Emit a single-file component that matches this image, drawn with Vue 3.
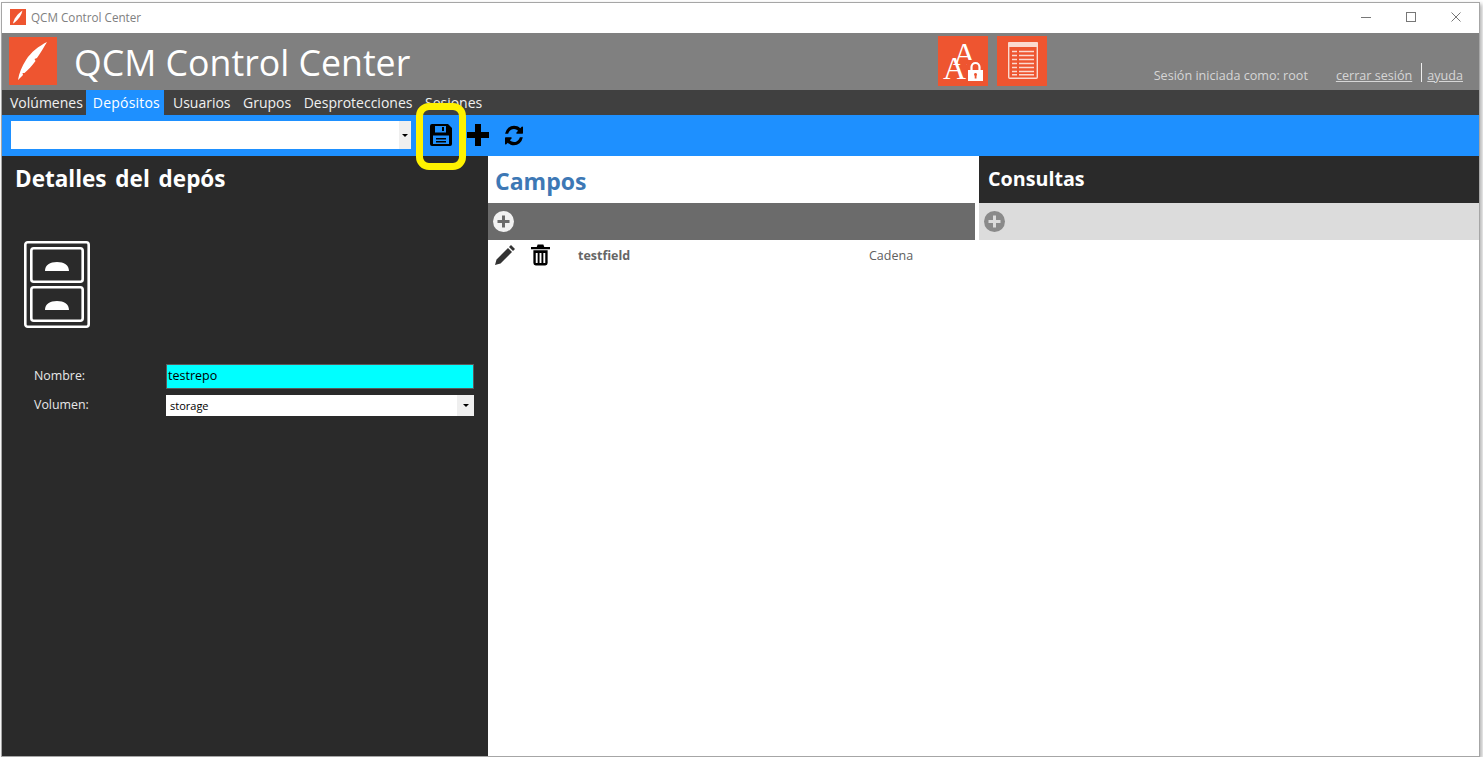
<script setup>
const tabs = ['Volúmenes', 'Depósitos', 'Usuarios', 'Grupos', 'Desprotecciones', 'Sesiones']
</script>

<template>
  <div class="window">
    <div class="titlebar">
      <svg class="title-logo" viewBox="0 0 16 16"><rect width="16" height="16" fill="#ee5530"/><path d="M3 14.500C4 10 7 5 12.500 1.500 11.500 6 9 10 4 14Z" fill="#fff"/></svg>
      <span class="title-text">QCM Control Center</span>
      <div class="win-buttons">
        <svg viewBox="0 0 10 10" class="wb"><path d="M0 5.500H10" stroke="#777" stroke-width="1" fill="none"/></svg>
        <svg viewBox="0 0 10 10" class="wb"><rect x=".5" y=".5" width="9" height="9" stroke="#777" fill="none"/></svg>
        <svg viewBox="0 0 10 10" class="wb"><path d="M.5.5L9.500 9.500M9.500.5L.5 9.500" stroke="#777" fill="none"/></svg>
      </div>
    </div>

    <header class="header">
      <svg class="logo" viewBox="0 0 48 48"><rect width="48" height="48" fill="#ee5530"/>
        <path d="M9 43C10 36 13 29 17 23 22 15 30 9 38 5 35 10 32 15 28 21L25.500 22 26.500 24C23 29 19 33 15.500 36L13.500 36 14 38Z" fill="#fff"/>
      </svg>
      <h1 class="app-name">QCM Control Center</h1>
      <div class="shortcuts">
        <svg class="shortcut" viewBox="0 0 50 50"><rect width="50" height="50" fill="#ee5530"/>
          <text x="26.500" y="29" class="serif mid">A</text>
          <text x="16.500" y="43" class="serif big">A</text>
          <rect x="28.500" y="24" width="18" height="22.500" fill="#ee5530"/>
          <path d="M33.500 34v-3a4 4 0 0 1 8 0v3" stroke="#fff" stroke-width="2.200" fill="none"/>
          <rect x="30" y="34" width="15" height="11" fill="#fff"/><rect x="36.700" y="38" width="1.800" height="4.500" fill="#ee5530"/><circle cx="37.500" cy="38.500" r="1.400" fill="#ee5530"/>
        </svg>
        <svg class="shortcut" viewBox="0 0 50 50"><rect width="50" height="50" fill="#ee5530"/>
          <rect x="11.700" y="7" width="28.600" height="35.300" rx="1" fill="none" stroke="#fbd9cf" stroke-width="1.400"/>
          <rect x="11" y="6" width="30" height="5" rx="1" fill="#fbd9cf"/>
          <path d="M15 15.500h5M22 15.500h15M15 19.500h5M22 19.500h15M15 23.500h5M22 23.500h15M15 27.500h5M22 27.500h15M15 31.500h5M22 31.500h15M15 35.500h5M22 35.500h15M15 38.700h5M22 38.700h15" stroke="#fbd9cf" stroke-width="1.400" fill="none"/>
        </svg>
      </div>
      <div class="session">
        <span class="who">Sesión iniciada como: root</span>
        <a class="link">cerrar sesión</a>
        <span class="sep"></span>
        <a class="link">ayuda</a>
      </div>
    </header>

    <nav class="tabs">
      <span v-for="t in tabs" :key="t" class="tab" :class="{ active: t === 'Depósitos' }">{{ t }}</span>
    </nav>

    <div class="toolbar">
      <div class="combo top-combo"><span class="combo-text"></span><span class="arrow"><i></i></span></div>
      <svg class="tool save" viewBox="0 0 22 22">
        <path fill-rule="evenodd" d="M2 0H18L22 4V20A2 2 0 0 1 20 22H2A2 2 0 0 1 0 20V2A2 2 0 0 1 2 0ZM5 2V8.500H16V2ZM3 11.500V20H19V11.500Z"/>
        <rect x="12" y="3" width="2" height="4"/>
        <path d="M6 14h10v1.500H6zM6 17h10v1.500H6z"/>
      </svg>
      <svg class="tool plus" viewBox="0 0 22 22"><path d="M8 0H14V8H22V14H14V22H8V14H0V8H8Z"/></svg>
      <svg class="tool refresh" viewBox="0 0 1792 1792" preserveAspectRatio="none"><path d="M1511 1056q0 5-1 7-64 268-268 434.500t-478 166.500q-146 0-282.500-55t-243.500-157l-129 129q-19 19-45 19t-45-19-19-45v-448q0-26 19-45t45-19h448q26 0 45 19t19 45-19 45l-137 137q71 66 161 102t187 36q134 0 250-65t186-179q11-17 53-117 8-23 30-23h192q13 0 22.500 9.500t9.500 22.500zm25-800v448q0 26-19 45t-45 19h-448q-26 0-45-19t-19-45 19-45l138-138q-148-137-349-137-134 0-250 65t-186 179q-11 17-53 117-8 23-30 23h-199q-13 0-22.500-9.500t-9.500-22.500v-7q65-268 270-434.500t480-166.500q146 0 284 55.500t245 156.500l130-129q19-19 45-19t45 19 19 45z"/></svg>
    </div>

    <main class="body">
      <aside class="details">
        <h2 class="details-title">Detalles del depós</h2>
        <svg class="cabinet" viewBox="0 0 66 87">
          <rect x="1.300" y="1.300" width="63.400" height="84.400" rx="2.500" fill="none" stroke="#fff" stroke-width="2.600"/>
          <rect x="7.300" y="7.300" width="51.400" height="33.400" rx="2.500" fill="none" stroke="#fff" stroke-width="2.600"/>
          <rect x="7.300" y="46.300" width="51.400" height="33.400" rx="2.500" fill="none" stroke="#fff" stroke-width="2.600"/>
          <path d="M21 30C21 24 26 21 33 21S45 24 45 30ZM21 69C21 63 26 60 33 60S45 63 45 69Z" fill="#fff"/>
        </svg>
        <div class="form">
          <label class="lbl">Nombre:</label>
          <div class="name-input">testrepo</div>
          <label class="lbl">Volumen:</label>
          <div class="combo vol-combo"><span class="combo-text">storage</span><span class="arrow"><i></i></span></div>
        </div>
      </aside>

      <section class="fields">
        <h2 class="fields-title">Campos</h2>
        <div class="bar dark-bar">
          <svg class="add" viewBox="0 0 21 21"><circle cx="10.500" cy="10.500" r="10.500" fill="#f2f2f2"/><path d="M9 4.500h3V9h4.500v3H12v4.500H9V12H4.500V9H9Z" fill="#6b6b6b"/></svg>
        </div>
        <div class="row">
          <svg class="pencil" viewBox="0 0 22 22"><path d="M17 1 21 5 19 7 15 3ZM14 4 18 8 6.500 19.500 1 21 2.500 15.500Z" fill="#333"/></svg>
          <svg class="trash" viewBox="0 0 20 22"><path fill-rule="evenodd" d="M7 0H13L14 2.500H20V5H0V2.500H6ZM2.500 6H17.500V19.500A2.500 2.500 0 0 1 15 22H5A2.500 2.500 0 0 1 2.500 19.500ZM5 9V19.500H7V9ZM9 9V19.500H11V9ZM13 9V19.500H15V9Z"/></svg>
          <span class="field-name">testfield</span>
          <span class="field-type">Cadena</span>
        </div>
      </section>

      <section class="queries">
        <h2 class="queries-title">Consultas</h2>
        <div class="bar light-bar">
          <svg class="add" viewBox="0 0 21 21"><circle cx="10.500" cy="10.500" r="10.500" fill="#8a8a8a"/><path d="M9 4.500h3V9h4.500v3H12v4.500H9V12H4.500V9H9Z" fill="#dcdcdc"/></svg>
        </div>
      </section>
    </main>

    <div class="highlight"></div>
  </div>
</template>

<style>
html, body { margin: 0; background: #fff; overflow: hidden; }
</style>

<style scoped>
.window {
  position: relative;
  box-sizing: border-box;
  width: 1479px;
  height: 755px;
  margin: 2px 0 0 1px;
  border: 1px solid #a6a6a6;
  box-shadow: 2px 2px 4px rgba(0,0,0,.3);
  display: flex;
  flex-direction: column;
  font-family: "Open Sans", "Noto Sans", sans-serif;
  background: #fff;
}
.titlebar { height: 30px; box-sizing: border-box; padding: 0 0 2px 8px; flex: none; display: flex; align-items: center; background: #fff; }
.title-logo { width: 16px; height: 16px; margin-right: 5px; }
.title-text { font-size: 11.700px; color: #808080; }
.win-buttons { margin-left: auto; display: flex; gap: 35px; padding-right: 18px; align-items: center; }
.wb { width: 10px; height: 10px; }

.header { height: 57px; flex: none; background: #808080; display: flex; padding-left: 7px; position: relative; }
.logo { width: 48px; height: 48px; margin-top: 4px; }
.app-name { margin: 4px 0 0 17px; font-size: 35.700px; line-height: 50px; font-weight: 400; color: #fff; white-space: nowrap; width: 864px; }
.shortcuts { display: flex; gap: 9px; margin-top: 3px; height: 50px; }
.shortcut { width: 50px; height: 50px; display: block; }
.serif { font-family: "Liberation Serif", serif; fill: #fff; text-anchor: middle; }
.big { font-size: 32px; }
.mid { font-size: 32px; }
.session { margin-left: auto; display: flex; align-items: center; height: 22px; margin-top: 31px; padding-right: 16px; font-size: 12.600px; color: #d6d6d6; }
.who { margin-right: 28px; }
.link { text-decoration: underline; }
.sep { width: 1px; height: 19px; background: #eee; margin: 0 5px 0 9px; position: relative; top: -3px; }

.tabs { height: 25px; flex: none; background: #404040; display: flex; padding-left: 1px; }
.tab { font-size: 14px; color: #f0f0f0; padding: 0 6px 0 6.500px; line-height: 25px; white-space: nowrap; }
.tab:first-child { padding: 0 3px 0 7px; }
.tab.active { background: #1e90ff; color: #fff; letter-spacing: .2px; padding: 0 4px 0 7px; margin-right: 2.500px; }

.toolbar { height: 41px; box-sizing: border-box; padding: 0 0 1px 9px; flex: none; background: #1e90ff; display: flex; align-items: center; }
.combo { display: flex; background: #fff; align-items: stretch; box-sizing: border-box; }
.top-combo { width: 400px; height: 28px; }
.combo-text { flex: 1; font-size: 11px; line-height: 22px; padding-left: 4px; color: #000; }
.arrow { width: 12px; background: #efefef; display: flex; align-items: center; justify-content: center; }
.arrow i { display: block; border-left: 3px solid transparent; border-right: 3px solid transparent; border-top: 3px solid #000; }
.tool { display: block; fill: #000; }
.save { width: 22px; height: 22px; margin-left: 19px; }
.plus { width: 22px; height: 22px; margin-left: 15px; }
.refresh { width: 21px; height: 23px; margin-left: 16px; }

.body { flex: 1; display: flex; min-height: 0; }
.details { width: 486px; flex: none; background: #2a2a2a; box-sizing: border-box; padding: 0 13px; }
.details-title { margin: 6px 0 0; font-size: 22.500px; line-height: 34px; font-weight: 700; color: #fff; word-spacing: 3px; }
.cabinet { display: block; width: 66px; height: 87px; margin: 45px 0 0 9px; }
.form { display: grid; grid-template-columns: 132px 308px; margin: 36px 0 0 19px; align-items: center; row-gap: 6px; }
.lbl { font-size: 12.400px; color: #e8e8e8; position: relative; top: -1px; }
.name-input { box-sizing: border-box; height: 25px; background: #00ffff; border: 1px solid #5a5a5a; font-size: 12.500px; line-height: 22px; color: #000; padding-left: 1px; }
.vol-combo { height: 21px; }
.vol-combo .combo-text { font-size: 11px; line-height: 22px; }
.vol-combo .arrow { width: 17px; }

.fields { width: 491px; flex: none; background: #fff; }
.queries { flex: 1; background: #fff; }
.fields-title, .queries-title { margin: 0; height: 47px; box-sizing: border-box; font-weight: 700; padding-left: 7px; }
.fields-title { color: #3d78b5; font-size: 23px; line-height: 51px; }
.queries-title { background: #2a2a2a; color: #fff; padding-left: 9px; font-size: 19.700px; line-height: 46px; }
.bar { height: 37px; display: flex; align-items: center; padding-left: 5px; }
.dark-bar { background: #6b6b6b; margin-right: 4px; }
.light-bar { background: #dcdcdc; }
.add { width: 21px; height: 21px; display: block; }
.row { display: flex; align-items: center; height: 30px; padding-left: 6px; }
.pencil { width: 22px; height: 22px; }
.trash { width: 19px; height: 22px; margin-left: 15px; }
.field-name { font-size: 12.500px; font-weight: 700; color: #666; margin-left: 28px; width: 291px; }
.field-type { font-size: 12.500px; color: #606060; }

.highlight {
  position: absolute;
  left: 414px;
  top: 100px;
  width: 50px;
  height: 67px;
  box-sizing: border-box;
  border: 7px solid #fff200;
  border-radius: 13px;
}
</style>
